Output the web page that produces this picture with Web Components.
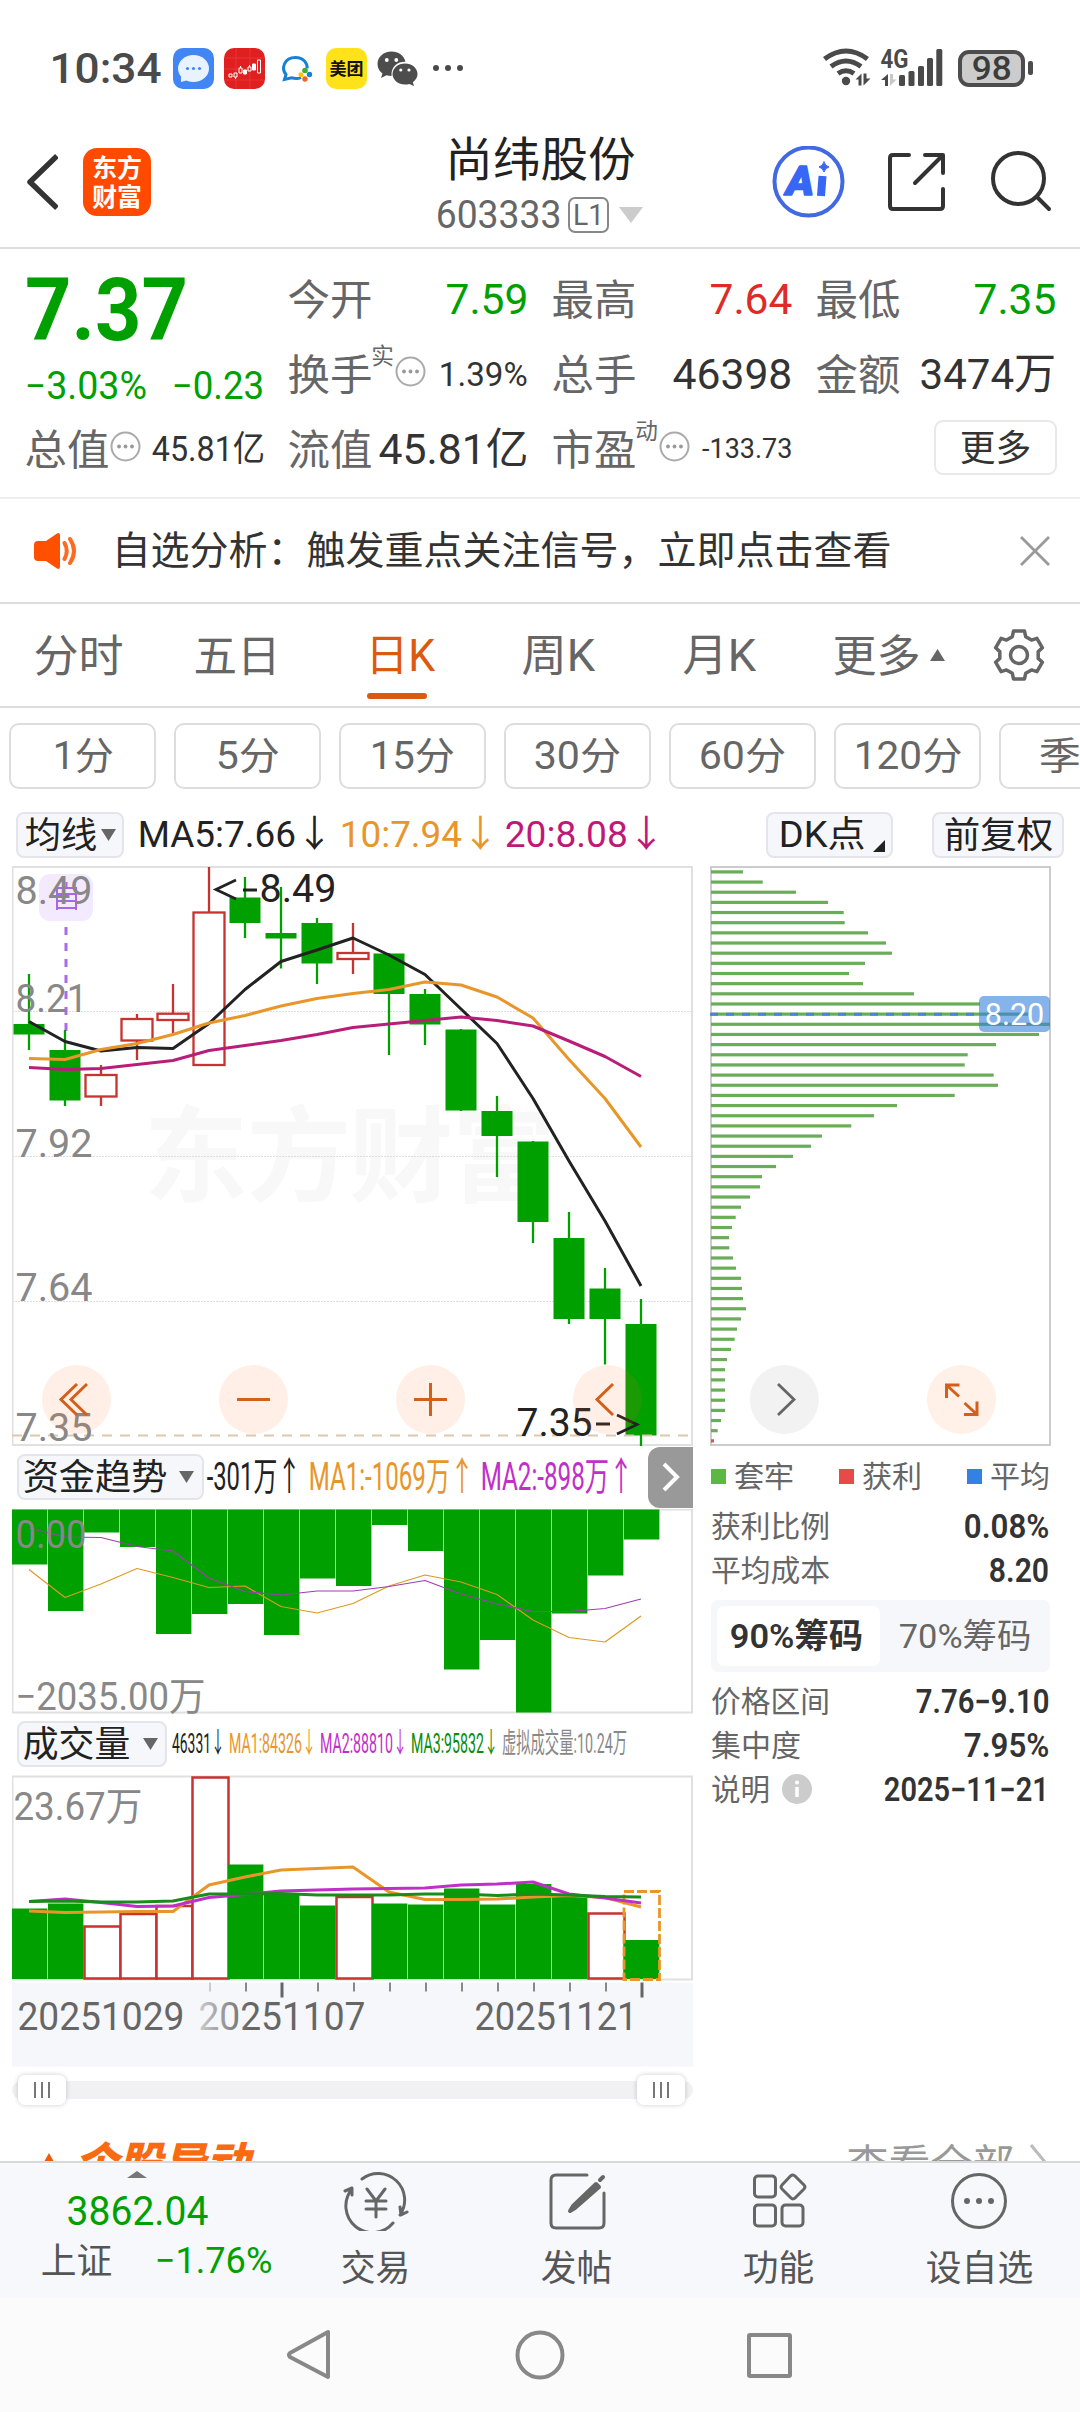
<!DOCTYPE html>
<html lang="zh-CN">
<head>
<meta charset="utf-8">
<title>尚纬股份 603333</title>
<style>
  html, body { margin: 0; padding: 0; background: #fff; }
  body { font-family: Roboto, "Noto Sans CJK SC", sans-serif; color: #333; width: 1080px; }
</style>
</head>
<body>
<stock-page></stock-page>

<script>
const GREEN = '#00a000';
const RED = '#c8322f';
const ORANGE = '#e8962a';
const PURPLE = '#c030c8';

class BaseElement extends HTMLElement {
  connectedCallback() {
    if (this.shadowRoot) return;
    const root = this.attachShadow({ mode: 'open' });
    const tpl = document.createElement('template');
    tpl.innerHTML = `<style>* { box-sizing: border-box; } svg { display: block; flex: none; }</style>` + this.render();
    root.appendChild(tpl.content.cloneNode(true));
  }
}

// <fit-text w="82" size="42">label</fit-text>
// One line of text, squeezed or stretched so that its ink is w px wide.
class FitText extends HTMLElement {
  connectedCallback() {
    if (this.shadowRoot) return;
    const w = +this.getAttribute('w');
    const size = +this.getAttribute('size');
    const weight = this.getAttribute('weight') || 400;
    const color = this.getAttribute('color') || 'inherit';
    const cjkOnly = !/[0-9A-Za-z]/.test(this.textContent);
    const root = this.attachShadow({ mode: 'open' });
    root.innerHTML = `
      <style>
        :host { display: block; flex: none; width: ${w}px; height: ${size}px; font-size: ${size}px; line-height: ${size}px; font-weight: ${weight}; color: ${color}; white-space: nowrap; }
        span { display: block; width: max-content; transform-origin: 0 50%; }
      </style>
      <span><slot></slot></span>
    `;
    const span = root.querySelector('span');
    const scale = (w + size * 0.07) / span.offsetWidth;
    const dy = cjkOnly ? 0.025 : 0.005;
    span.style.transform = `translate(${-size * 0.035}px, ${size * dy}px) scaleX(${scale})`;
  }
}

class StatusBar extends BaseElement {
  render() {
    return `
      <style>
        :host { display: flex; align-items: center; height: 116px; padding: 20px 47px 0 51px; color: #4a4a4a; }
        .app { width: 41px; height: 41px; margin-right: 10px; }
        .right { margin-left: auto; display: flex; align-items: center; }
        .battery { width: 67px; height: 37px; border: 4px solid #4d4d4d; border-radius: 11px; background: #ccc; display: flex; align-items: center; justify-content: center; }
        .cap { width: 5px; height: 14px; border-radius: 2px; background: #4d4d4d; margin-left: 3px; }
      </style>
      <fit-text w="109" size="43" weight="500" style="margin-right:13px">10:34</fit-text>
      <svg class="app" viewBox="0 0 41 41"><rect width="41" height="41" rx="10" fill="#4285f4"/><ellipse cx="20.5" cy="20.5" rx="15.5" ry="13.5" fill="#e8f3ff"/><path d="M8 28v6l7-2z" fill="#e8f3ff"/><g fill="#4285f4"><circle cx="14.5" cy="20.5" r="1.6"/><circle cx="20.5" cy="20.5" r="1.6"/><circle cx="26.5" cy="20.5" r="1.6"/></g></svg>
      <svg class="app" viewBox="0 0 41 41"><rect width="41" height="41" rx="10" fill="#e02020"/><g stroke="#ea3c3c" stroke-width=".7"><path d="M0 10h41M0 21h41M0 32h41M12 0v41M26 0v41"/></g><g stroke="#fff" stroke-width="1" fill="none"><path d="M5 26h3v3H5zM10 25h3v4h-3zM15 20h3v5h-3zM24 19h3v4h-3zM11.5 29v2M16.5 18v2M25.5 17v2"/><path d="M19.5 22h3v4h-3zM28.5 16h3v6h-3z" fill="#fff"/><path d="M33.5 12h3v13h-3z"/></g></svg>
      <svg class="app" viewBox="0 0 41 41"><path d="M26 29.500c-2.500 1.200-6 1.300-9.500.3L9.500 31.500l1.500-5c-5-6-2-17 9.500-17 8 0 12 5.500 11.700 11" fill="none" stroke="#1681d8" stroke-width="3"/><circle cx="30" cy="22.5" r="2.8" fill="#3fae29"/><circle cx="34.5" cy="26.5" r="2.7" fill="#1681d8"/><circle cx="30" cy="31" r="2.7" fill="#ee6723"/><circle cx="26" cy="26.8" r="2.5" fill="#fcc203"/></svg>
      <svg class="app" viewBox="0 0 41 41"><rect width="41" height="41" rx="10" fill="#ffe21a"/><text x="3.5" y="26.5" font-size="17" font-weight="700" fill="#111" textLength="34">美团</text></svg>
      <svg class="app" viewBox="0 0 41 41" fill="#4d4d4d"><path d="M14.500 3.500C6.500 3.500.5 9 .5 16c0 4 2 7.400 5 9.600L4 30l5.500-2.700c1.600.5 3.300.6 5 .6C14 18 21 13.500 28.500 13.800 27 7.500 21.500 3.500 14.500 3.500z"/><path d="M28 15.500c-7 0-12.500 4.700-12.500 10.500S21 36.500 28 36.500c1.500 0 3-.2 4.300-.6L37 38l-1.200-3.800c3-2 4.700-4.800 4.700-8.200 0-5.800-5.500-10.500-12.500-10.500z"/><g fill="#fff"><circle cx="9.8" cy="12" r="1.9"/><circle cx="19.3" cy="12" r="1.9"/><circle cx="23.8" cy="22" r="1.6"/><circle cx="32" cy="22" r="1.6"/></g></svg>
      <svg width="40" height="10" viewBox="0 0 40 10" fill="#4a4a4a"><circle cx="8" cy="5" r="3"/><circle cx="20" cy="5" r="3"/><circle cx="32" cy="5" r="3"/></svg>
      <div class="right">
        <svg width="135" height="40" viewBox="823 48 135 40" fill="none" stroke="#4a4a4a" stroke-width="5">
          <path d="M824.500 59Q846 43 867.500 59M831 66.500Q846 55.500 861 66.500M838 73.500Q846 68 854 73.500"/>
          <g stroke="none" fill="#4a4a4a"><circle cx="846" cy="81" r="4.2"/><path d="M861.500 73.500v12h-3v-6h-3zM863.500 73.500v12l7-7h-4v-5zM888 74v12h-3v-6h-4z"/><path d="M890 74v12l6.500-6.500h-3.500v-5.500z" fill="#c8c8c8"/>
          <text x="880.5" y="67.5" font-size="25" font-weight="700" textLength="28" lengthAdjust="spacingAndGlyphs">4G</text>
          <rect x="899" y="75" width="6" height="11" rx="1.5"/><rect x="908.5" y="71" width="6" height="15" rx="1.5"/><rect x="918" y="66" width="6" height="20" rx="1.5"/><rect x="927" y="58" width="6" height="28" rx="1.5"/><rect x="936.3" y="49" width="6" height="37" rx="1.5"/></g>
        </svg>
        <div class="battery"><fit-text w="38" size="34" weight="500" color="#3c3c3c">98</fit-text></div>
        <div class="cap"></div>
      </div>
    `;
  }
}

class StockHeader extends BaseElement {
  render() {
    return `
      <style>
        :host { display: grid; grid-template-columns: 1fr auto 1fr; align-items: center; height: 133px; border-bottom: 2px solid #ddd; box-sizing: border-box; }
        .left { display: flex; align-items: center; padding-left: 26px; }
        .logo { width: 68px; height: 68px; margin-left: 25px; border-radius: 14px; background: #ff4a00; display: flex; flex-direction: column; align-items: center; justify-content: center; gap: 4px; }
        .mid { display: flex; flex-direction: column; align-items: center; gap: 14px; padding-top: 5px; }
        .code { display: flex; align-items: center; gap: 8px; color: #666; }
        .l1 { width: 41px; height: 36px; border: 2px solid #888; border-radius: 7px; display: flex; align-items: center; justify-content: center; }
        .tools { display: flex; align-items: center; justify-content: flex-end; padding-right: 28px; }
      </style>
      <div class="left">
        <svg width="32" height="60" viewBox="26 152 32 60" fill="none" stroke="#333" stroke-width="5.5" stroke-linejoin="round"><path d="M57 156L30 182l27 26"/></svg>
        <div class="logo"><fit-text w="48" size="25" weight="700" color="#fff">东方</fit-text><fit-text w="48" size="25" weight="700" color="#fff">财富</fit-text></div>
      </div>
      <div class="mid">
        <fit-text w="187" size="47" color="#222">尚纬股份</fit-text>
        <div class="code"><fit-text w="123" size="38">603333</fit-text><div class="l1"><fit-text w="29" size="30">L1</fit-text></div>
        <svg width="24" height="16" viewBox="0 0 24 16" style="margin-left:2px"><path d="M0 0h24L12 16z" fill="#ccc"/></svg></div>
      </div>
      <div class="tools">
        <svg width="280" height="72" viewBox="772 146 280 72" fill="none" stroke="#333" stroke-width="4" stroke-linecap="round" stroke-linejoin="round">
          <circle cx="808.5" cy="181.5" r="34" stroke="#4169e1"/>
          <text x="786" y="195" font-size="40" font-weight="900" font-style="italic" fill="#3866f5" stroke="#3866f5" stroke-width="1.5" textLength="28" lengthAdjust="spacingAndGlyphs">A</text>
          <path d="M822.500 176l-1.500 20" stroke="#3866f5" stroke-width="8" stroke-linecap="butt"/>
          <path d="M824 162q1 4 5 5-4 1-5 5-1-4-5-5 4-1 5-5z" fill="#3866f5" stroke="#3866f5" stroke-width="1"/>
          <path d="M909 155h-16q-3 0-3 3v48q0 3 3 3h47q3 0 3-3v-17M925 155h18v18M942 156l-27 27"/>
          <circle cx="1018.5" cy="178.5" r="25.5"/><path d="M1037 197l12 12"/>
        </svg>
      </div>
    `;
  }
}

const MORE_DOT = `<svg width="31" height="31" viewBox="0 0 31 31" fill="#999"><circle cx="15.5" cy="15.5" r="14" fill="none" stroke="#aaa" stroke-width="2"/><circle cx="9" cy="15.5" r="1.9"/><circle cx="15.5" cy="15.5" r="1.9"/><circle cx="22" cy="15.5" r="1.9"/></svg>`;

// label / value pair, "dot" adds the round hint icon, "sup" a small raised mark
class QuoteCell extends BaseElement {
  render() {
    const a = n => this.getAttribute(n);
    const sup = a('sup') ? `<fit-text class="sup" w="21" size="23" color="#666">${a('sup')}</fit-text>` : '';
    return `
      <style>
        :host { display: flex; align-items: center; height: 75px; }
        .sup { align-self: flex-start; margin: 7px 0 0 1px; }
        .dot { margin: -7px 0 0 2px; }
        .value { margin-left: auto; }
      </style>
      <fit-text w="82" size="42" color="#666">${a('label')}</fit-text>${sup}
      ${a('dot') !== null ? `<div class="dot">${MORE_DOT}</div>` : ''}
      <fit-text class="value" w="${a('w')}" size="${a('size') || 43}" color="${a('color') || '#333'}">${a('value')}</fit-text>
    `;
  }
}

class QuoteGrid extends BaseElement {
  render() {
    return `
      <style>
        :host { display: grid; grid-template-columns: 237.5px 238px 238px 238px; column-gap: 25.7px; grid-auto-rows: 75px; height: 250px; padding: 13px 25px 0 26px; border-bottom: 2px solid #eee; box-sizing: border-box; }
        .price { grid-row: 1 / span 2; color: ${GREEN}; display: flex; flex-direction: column; padding: 5px 0 0 2px; }
        .diff { display: flex; gap: 27px; margin: 13px 0 0 -2px; }
        .more { justify-self: end; align-self: center; width: 123px; height: 55px; border: 2px solid #e8e8e8; border-radius: 9px; display: flex; align-items: center; justify-content: center; margin-right: -2px; margin-top: -4px; }
      </style>
      <div class="price">
        <fit-text w="157" size="87" weight="700">7.37</fit-text>
        <div class="diff"><fit-text w="120" size="38">−3.03%</fit-text><fit-text w="90" size="38">−0.23</fit-text></div>
      </div>
      <quote-cell label="今开" value="7.59" w="80" color="${GREEN}"></quote-cell>
      <quote-cell label="最高" value="7.64" w="80" color="#dc2b28"></quote-cell>
      <quote-cell label="最低" value="7.35" w="80" color="${GREEN}"></quote-cell>
      <quote-cell label="换手" sup="实" dot value="1.39%" w="87" size="33"></quote-cell>
      <quote-cell label="总手" value="46398" w="117"></quote-cell>
      <quote-cell label="金额" value="3474万" w="134"></quote-cell>
      <quote-cell label="总值" dot value="45.81亿" w="111" size="35"></quote-cell>
      <quote-cell label="流值" value="45.81亿" w="147"></quote-cell>
      <quote-cell label="市盈" sup="动" dot value="-133.73" w="88" size="27"></quote-cell>
      <div class="more"><fit-text w="69" size="36">更多</fit-text></div>
    `;
  }
}

class NoticeBar extends BaseElement {
  render() {
    return `
      <style>
        :host { display: flex; align-items: center; height: 105px; padding: 0 30px 0 34px; border-bottom: 2px solid #ddd; box-sizing: border-box; }
        fit-text { margin-left: 34px; }
        .close { margin-left: auto; }
      </style>
      <svg width="45" height="36" viewBox="0 0 45 36"><path d="M4 8h8L23 0.500q3-1.500 3 2v31q0 3.500-3 2L12 28H4q-4 0-4-4V12q0-4 4-4z" fill="#ff5000"/><path d="M30.500 10q4.500 8 0 16M36 6q8 12 0 24" fill="none" stroke="#ff6a20" stroke-width="4" stroke-linecap="round"/></svg>
      <fit-text w="777" size="39">自选分析：触发重点关注信号，立即点击查看</fit-text>
      <svg class="close" width="30" height="30" viewBox="0 0 30 30"><path d="M1 1l28 28M29 1L1 29" stroke="#999" stroke-width="2.8"/></svg>
    `;
  }
}

function gearPath(cx, cy) {
  const pts = [];
  const at = (r, deg) => {
    const t = deg * Math.PI / 180;
    pts.push(`${(cx + r * Math.cos(t)).toFixed(1)} ${(cy + r * Math.sin(t)).toFixed(1)}`);
  };
  for (let i = 0; i < 6; i++) {
    const a = i * 60 + 30;
    at(19.5, a - 20); at(24.5, a - 13); at(24.5, a + 13); at(19.5, a + 20);
  }
  return `M${pts.join('L')}Z`;
}

class PeriodTabs extends BaseElement {
  render() {
    const tabs = [['分时', 87, 73], ['五日', 84, 88], ['日K', 67, 89, 1], ['周K', 71, 90], ['月K', 71, 79], ['更多', 85, 0]];
    return `
      <style>
        :host { display: flex; align-items: center; height: 104px; padding: 0 34px 0 35px; border-bottom: 2px solid #ddd; box-sizing: border-box; color: #666; }
        .tab { display: flex; flex-direction: column; align-items: flex-start; padding-top: 2px; }
        .on { color: #dc5a10; }
        .on::after { content: ""; width: 60px; height: 6px; border-radius: 3px; background: currentColor; margin: 15px 0 -21px; }
        .gear { margin-left: auto; }
      </style>
      ${tabs.map(([t, w, gap, on]) => `<div class="tab${on ? ' on' : ''}" style="margin-right:${gap}px"><fit-text w="${w}" size="44">${t}</fit-text></div>`).join('')}
      <svg width="15" height="12" viewBox="0 0 15 12" style="margin-left:11px"><path d="M0 12h15L7.500 0z" fill="#666"/></svg>
      <svg class="gear" width="54" height="54" viewBox="0 0 54 54" fill="none" stroke="#666" stroke-width="3.5" stroke-linejoin="round"><path d="${gearPath(27, 27)}"/><circle cx="27" cy="27" r="8.5"/></svg>
    `;
  }
}

class MinuteRow extends BaseElement {
  render() {
    const items = [['1分', 58], ['5分', 61], ['15分', 83], ['30分', 85], ['60分', 85], ['120分', 106], ['季K', 66]];
    return `
      <style>
        :host { display: flex; gap: 18px; height: 95px; padding: 15px 0 0 9px; overflow: hidden; color: #666; box-sizing: border-box; }
        .item { flex: none; width: 147px; height: 66px; border: 2px solid #ddd; border-radius: 10px; display: flex; align-items: center; justify-content: center; }
      </style>
      ${items.map(([t, w]) => `<div class="item"><fit-text w="${w}" size="38">${t}</fit-text></div>`).join('')}
    `;
  }
}

class ToolPill extends BaseElement {
  render() {
    return `
      <style>
        :host { display: flex; flex: none; align-items: center; height: 46px; border: 2px solid #e4e5ec; border-radius: 8px; background: #f6f7fb; padding: 0 8px; box-sizing: border-box; color: #222; }
      </style>
      <slot></slot>
    `;
  }
}

const DOWN = (w = 15) => `<svg width="${w}" height="12" viewBox="0 0 15 12"><path d="M0 0h15L7.500 12z" fill="#666"/></svg>`;

class IndicatorRow extends BaseElement {
  render() {
    return `
      <style>:host { display: flex; align-items: center; height: 63px; padding: 0 16px 0 16px; box-sizing: border-box; }</style>
      <tool-pill style="width:108px"><fit-text w="70" size="36">均线</fit-text><div style="margin-left:5px">${DOWN()}</div></tool-pill>
      <fit-text style="margin-left:15px" w="193" size="37" color="#222">MA5:7.66↓</fit-text>
      <fit-text style="margin-left:9px" w="157" size="37" color="${ORANGE}">10:7.94↓</fit-text>
      <fit-text style="margin-left:8px" w="158" size="37" color="#c01878">20:8.08↓</fit-text>
      <tool-pill style="width:127px;margin-left:auto;padding-left:12px"><fit-text w="84" size="36">DK点</fit-text><svg width="12" height="12" viewBox="0 0 12 12" style="margin:22px 0 0 9px"><path d="M12 0v12H0z" fill="#222"/></svg></tool-pill>
      <tool-pill style="width:132px;margin-left:39px;padding-left:11px"><fit-text w="107" size="36">前复权</fit-text></tool-pill>
    `;
  }
}

// ---- charts: 18 daily slots, 36px apart ----

const SLOT = 36;
const cx = i => 29 + SLOT * i;
const polyline = (ys, color, width) =>
  `<polyline points="${ys.map((y, i) => `${cx(i)},${y}`).join(' ')}" fill="none" stroke="${color}" stroke-width="${width}" stroke-linejoin="round"/>`;
const label = (x, y, w, text, size = 39, color = '#888') =>
  `<text x="${x - size * 0.04}" y="${y}" font-size="${size}" fill="${color}" textLength="${w + size * 0.08}" lengthAdjust="spacingAndGlyphs">${text}</text>`;
const frame = (x, y, w, h, color = '#e0e0e0') =>
  `<rect x="${x}" y="${y}" width="${w}" height="${h}" fill="none" stroke="${color}" stroke-width="2"/>`;

class KChart extends BaseElement {
  render() {
    // [up, bodyTop, bodyBottom, high, low]
    const candles = [
      [0, 1024, 1034.5, 974, 1050], [0, 1050, 1100.5, 1030, 1106], [1, 1075, 1096.5, 1065, 1106],
      [1, 1019, 1040.5, 1014, 1060], [1, 1013.7, 1020, 984, 1033.5], [1, 912.5, 1065, 867, 1065],
      [0, 897.5, 923, 877, 938], [0, 933, 938.5, 887, 968.5], [0, 923, 963.5, 918, 984],
      [1, 953, 959, 923, 974], [0, 953.5, 994, 953, 1055], [0, 994, 1024.5, 989, 1045],
      [0, 1029.5, 1110.5, 1029, 1111], [0, 1111, 1136, 1096, 1177], [0, 1141.5, 1222, 1141, 1243],
      [0, 1238, 1319, 1212, 1324], [0, 1288.5, 1319, 1268, 1364.5], [0, 1324, 1435.5, 1299, 1446],
    ];
    const ma5 = [1021.5, 1041.5, 1051, 1047.5, 1048.5, 1023.5, 989.5, 961.5, 950, 938, 955, 974.5, 1009, 1043.5, 1098.5, 1161, 1221, 1286];
    const ma10 = [1058.5, 1059.5, 1049.5, 1043.5, 1034.5, 1023, 1015.5, 1006, 998.5, 993.5, 989.5, 982, 985, 997, 1018, 1059.5, 1098.5, 1147];
    const ma20 = [1067.5, 1069.5, 1068.5, 1064.5, 1060.5, 1050.5, 1045.5, 1040.5, 1034.5, 1027.5, 1024, 1020.5, 1017, 1020.5, 1026, 1041, 1056.5, 1076.5];
    const body = candles.map(([up, t, b, hi, lo], i) => up
      ? `<path d="M${cx(i)} ${hi}V${t}M${cx(i)} ${b}V${lo}" stroke="${RED}" stroke-width="2.3"/><rect x="${cx(i) - 15.5}" y="${t}" width="31" height="${b - t}" fill="#fff" fill-opacity=".6" stroke="${RED}" stroke-width="2.3"/>`
      : `<path d="M${cx(i)} ${hi}V${lo}" stroke="${GREEN}" stroke-width="2.3"/><rect x="${cx(i) - 15.5}" y="${t}" width="31" height="${b - t}" fill="${GREEN}"/>`).join('');
    const round = x => `<circle cx="${x}" cy="1399.5" r="34.5" fill="#ff6e1e" fill-opacity=".11"/>`;
    return `
      <style>:host { display: block; }</style>
      <svg width="681" height="580" viewBox="12 866 681 580">
        <text x="144" y="1194" font-size="104" font-weight="700" fill="#f8f8f8" textLength="412">东方财富</text>
        ${frame(12.5, 867, 679.5, 578)}
        <path d="M12 1011.500H692M12 1156.500H692M12 1301.500H692" stroke="#ddd" stroke-width="1" stroke-dasharray="2 1"/>
        <rect x="39" y="874" width="54" height="47" rx="11" fill="#f4eafe"/>
        <path d="M57 910V888h19v22M57 894h19M57 901h19M57 908h19M66.500 882v6" fill="none" stroke="#a866e8" stroke-width="2"/>
        <path d="M66 927V1032" stroke="#ae6ae6" stroke-width="3" stroke-dasharray="8 8"/>
        ${body}
        ${polyline(ma5, '#222', 3)}${polyline(ma10, ORANGE, 3)}${polyline(ma20, '#b81e78', 3)}
        <path d="M12 1435.500H690" stroke="#dcc8ae" stroke-width="1.8" stroke-dasharray="10 8"/>
        ${label(17, 904, 74, '8.49')}${label(17, 1011.5, 69, '8.21')}${label(17, 1156.5, 74, '7.92')}${label(17, 1300.5, 74, '7.64')}${label(17, 1441, 74, '7.35')}
        ${label(261, 902, 74, '8.49', 39, '#222')}
        ${label(518, 1436, 73, '7.35', 39, '#222')}
        <path d="M236 880l-20 9.500 20 9.500M243 890h14M596 1424h14M617 1415l20 9.500-20 9.500" fill="none" stroke="#222" stroke-width="2.8"/>
        ${round(76.5)}${round(253.5)}${round(430.5)}${round(607.5)}
        <g fill="none" stroke="#d2601a" stroke-width="3">
          <path d="M77 1384l-16 15.500 16 15.500M87 1384l-16 15.500 16 15.500M237 1399.500h33M414 1399.500h33M430.500 1383v33M613 1384l-16 15.500 16 15.500"/>
        </g>
      </svg>
    `;
  }
}

class FlowChart extends BaseElement {
  render() {
    const ends = [1564, 1610.5, 1532, 1546.5, 1633.5, 1613.5, 1603.5, 1634.5, 1578, 1585.5, 1524.5, 1550.5, 1669, 1639.5, 1712, 1613, 1575, 1539];
    const ma1 = [1569, 1597, 1583.5, 1568, 1577, 1587, 1585.5, 1606, 1612.5, 1603, 1585.5, 1574.5, 1581.5, 1594, 1619.5, 1637, 1641.5, 1615.5];
    const ma2 = [1527.5, 1536.5, 1537, 1546, 1550.5, 1577.5, 1591, 1594.5, 1590.5, 1590.5, 1586, 1580, 1593.5, 1603.5, 1611, 1611, 1608, 1598.5];
    return `
      <style>:host { display: block; }</style>
      <svg width="681" height="205" viewBox="12 1508.5 681 205">
        ${frame(12.5, 1509, 679.5, 203)}
        ${ends.map((y, i) => `<rect x="${12 + SLOT * i}" y="1509" width="35.4" height="${y - 1509}" fill="${GREEN}"/>`).join('')}
        ${polyline(ma1, '#dc9a20', 1.2)}${polyline(ma2, '#a03cb4', 1.2)}
        ${label(17, 1547, 68, '0.00')}${label(17, 1709, 187, '−2035.00万')}
      </svg>
    `;
  }
}

class VolumeChart extends BaseElement {
  render() {
    const bars = [
      [0, 1908], [0, 1903], [1, 1926], [1, 1913.5], [1, 1905.5], [1, 1777], [0, 1864], [0, 1892.5], [0, 1905],
      [1, 1896.5], [0, 1903], [0, 1904], [0, 1888], [0, 1904], [0, 1883.5], [0, 1895], [1, 1913], [0, 1939.5],
    ];
    const ma1 = [1910.5, 1912, 1911.5, 1911, 1911, 1884.5, 1876.5, 1869.5, 1868, 1866.5, 1891.5, 1899, 1899, 1898.5, 1896.5, 1895, 1897, 1906.5];
    const ma2 = [1901, 1898.5, 1902, 1906, 1905.5, 1897, 1894, 1890.5, 1889.5, 1888.5, 1888, 1887.5, 1884.5, 1883.5, 1881.5, 1893.5, 1897.5, 1902.5];
    const ma3 = [1901, 1900.5, 1901.5, 1901.5, 1900.5, 1893.5, 1893.5, 1893, 1894.5, 1894.5, 1894.5, 1893.5, 1893.5, 1895, 1893.5, 1894.5, 1896, 1896.5];
    const ticks = Array.from({ length: 13 }, (_, k) => {
      const major = k === 2 || k === 12;
      return `<path d="M${210 + SLOT * k} 1982v${major ? 15 : 9}" stroke="${k ? (major ? '#666' : '#888') : '#ccc'}" stroke-width="${major ? 3 : 2}"/>`;
    }).join('');
    return `
      <style>:host { display: block; }</style>
      <svg width="681" height="292" viewBox="12 1774.5 681 292">
        ${frame(12.5, 1776, 679.5, 203)}
        ${bars.map(([up, y], i) => up
          ? `<rect x="${12.5 + SLOT * i}" y="${y}" width="36" height="${1978 - y}" fill="#fff" stroke="${RED}" stroke-width="2.5"/>`
          : `<rect x="${12 + SLOT * i}" y="${y}" width="35.4" height="${1978.5 - y}" fill="${GREEN}"/>`).join('')}
        <rect x="624" y="1891" width="35.5" height="88" fill="none" stroke="${ORANGE}" stroke-width="2.8" stroke-dasharray="10 3"/>
        ${polyline(ma1, ORANGE, 3)}${polyline(ma2, PURPLE, 3)}${polyline(ma3, '#1a8c1a', 3)}
        ${label(15, 1819, 126, '23.67万')}
        <rect x="12" y="1982" width="681" height="84" fill="#f6f7fa"/>
        ${ticks}
        <defs><linearGradient id="fade"><stop offset="0" stop-color="#ccc"/><stop offset=".3" stop-color="#666"/></linearGradient></defs>
        ${label(19, 2029, 164, '20251029', 38, '#666')}${label(200, 2029, 164, '20251107', 38, 'url(#fade)')}${label(476, 2029, 160, '20251121', 38, '#666')}
      </svg>
    `;
  }
}

class RangeSlider extends BaseElement {
  render() {
    const grip = '<svg width="16" height="16" viewBox="0 0 16 16"><path d="M1 0v16M8 0v16M15 0v16" stroke="#777" stroke-width="2"/></svg>';
    return `
      <style>
        :host { display: flex; align-items: center; justify-content: space-between; height: 18px; margin-top: 14px; padding: 0 8px 0 6px; border-radius: 9px; background: #f1f1f3; box-sizing: border-box; }
        .knob { width: 48px; height: 30px; border-radius: 7px; background: #fff; box-shadow: 0 0 5px rgba(0,0,0,.2); display: flex; align-items: center; justify-content: center; }
      </style>
      <div class="knob">${grip}</div><div class="knob">${grip}</div>
    `;
  }
}

class ChipChart extends BaseElement {
  render() {
    const widths = [
      32, 51.7, 85, 117, 132.7, 133.7, 157, 175, 181, 154, 138, 152, 203, 269, 317, 339, 328, 285, 256.7, 253.7,
      282.7, 287, 243.7, 186, 163, 140.3, 111, 100, 82, 65, 51, 49, 39, 30, 24.7, 21, 18, 18.3, 22, 25,
      30, 31, 32, 35, 30, 26, 23.7, 20, 16, 14, 14, 14, 14, 14, 10, 6.7, 3,
    ];
    return `
      <style>:host { display: block; }</style>
      <svg width="342" height="580" viewBox="710 866 342 580">
        ${frame(711, 867, 339, 578, '#ccc')}
        ${widths.map((w, i) => `<rect x="711" y="${870.3 + 10.16 * i}" width="${w}" height="3.2" fill="${i === 56 ? '#d9534f' : '#6aad58'}"/>`).join('')}
        <path d="M710 1014.200H977" stroke="#4a84cc" stroke-width="3" stroke-dasharray="8 8"/>
        <rect x="979" y="996" width="71" height="36" rx="5" fill="#3480dc" fill-opacity=".6"/>
        ${label(986, 1025, 57, '8.20', 31, '#fff')}
        <circle cx="784.3" cy="1399.5" r="34.5" fill="#f2f2f2"/>
        <path d="M778 1384l16 15.500-16 15.500" fill="none" stroke="#666" stroke-width="2.8"/>
        <circle cx="961.5" cy="1399.5" r="34.5" fill="#fff0e8"/>
        <path d="M946.500 1398v-13h13M947 1385.500l12 11M977 1401.500v13h-13M976.500 1414l-12-11" fill="none" stroke="#d2601a" stroke-width="3"/>
      </svg>
    `;
  }
}

class ChipStats extends BaseElement {
  render() {
    const row = (l, lw, v, vw, extra = '') =>
      `<div class="row"><fit-text w="${lw}" size="30" color="#666">${l}</fit-text>${extra}<fit-text class="v" w="${vw}" size="33" weight="600">${v}</fit-text></div>`;
    const key = (c, t) => `<div class="key"><i style="background:${c}"></i><fit-text w="58" size="30">${t}</fit-text></div>`;
    return `
      <style>
        :host { display: flex; flex-direction: column; width: 339px; margin-left: 1px; }
        .legend { display: flex; justify-content: space-between; height: 58px; align-items: center; color: #666; padding: 2px 1px 0 0; }
        .key { display: flex; align-items: center; gap: 9px; }
        .key i { width: 15px; height: 15px; }
        .row { display: flex; align-items: center; height: 44px; padding: 0 2px 0 1px; }
        .v { margin-left: auto; }
        .seg { display: flex; height: 72px; margin: 8px 0 7px; padding: 6px; border-radius: 7px; background: #f6f7fa; }
        .seg div { flex: 1; display: flex; align-items: center; justify-content: center; color: #666; border-radius: 7px; }
        .seg .on { background: #fff; color: #333; padding-right: 4px; }
        .seg .off { padding-left: 6px; }
      </style>
      <div class="legend">${key('#5cb840', '套牢')}${key('#e84a4a', '获利')}${key('#3480e4', '平均')}</div>
      ${row('获利比例', 117, '0.08%', 83)}
      ${row('平均成本', 117, '8.20', 58)}
      <div class="seg"><div class="on"><fit-text w="131" size="34" weight="600">90%筹码</fit-text></div><div class="off"><fit-text w="130" size="34">70%筹码</fit-text></div></div>
      ${row('价格区间', 117, '7.76−9.10', 131)}
      ${row('集中度', 88, '7.95%', 83)}
      ${row('说明', 57, '2025−11−21', 163, '<svg width="30" height="30" viewBox="0 0 30 30" style="margin-left:13px"><circle cx="15" cy="15" r="15" fill="#ccc"/><circle cx="15" cy="8.5" r="2" fill="#fff"/><path d="M15 13v10" stroke="#fff" stroke-width="3.5"/></svg>')}
    `;
  }
}

class ChartArea extends BaseElement {
  render() {
    return `
      <style>
        :host { display: flex; padding-left: 12px; gap: 17px; }
        .left { width: 681px; flex: none; }
        .head { display: flex; align-items: center; padding-left: 5px; }
        .next { margin-left: auto; width: 45px; height: 61px; border-radius: 12px 0 0 12px; background: #999; display: flex; align-items: center; justify-content: center; }
      </style>
      <div class="left">
        <k-chart></k-chart>
        <div class="head" style="height:62.5px">
          <tool-pill style="width:187px;padding-left:5px"><fit-text w="142" size="36">资金趋势</fit-text><div style="margin-left:13px">${DOWN()}</div></tool-pill>
          <fit-text style="margin-left:4px" w="92" size="39" color="#222">-301万↑</fit-text>
          <fit-text style="margin-left:10px" w="163" size="39" color="${ORANGE}">MA1:-1069万↑</fit-text>
          <fit-text style="margin-left:9px" w="150" size="39" color="${PURPLE}">MA2:-898万↑</fit-text>
          <div class="next"><svg width="18" height="30" viewBox="0 0 18 30"><path d="M2 2l13 13L2 28" fill="none" stroke="#fff" stroke-width="4"/></svg></div>
        </div>
        <flow-chart></flow-chart>
        <div class="head" style="height:61px">
          <tool-pill style="width:150px;padding-left:5px"><fit-text w="105" size="36">成交量</fit-text><div style="margin-left:14px">${DOWN()}</div></tool-pill>
          <fit-text style="margin-left:6px" w="51" size="28" color="#222">46331↓</fit-text>
          <fit-text style="margin-left:6px" w="85" size="28" color="${ORANGE}">MA1:84326↓</fit-text>
          <fit-text style="margin-left:6px" w="85" size="28" color="${PURPLE}">MA2:88810↓</fit-text>
          <fit-text style="margin-left:6px" w="85" size="28" color="#0a8c0a">MA3:95832↓</fit-text>
          <fit-text style="margin-left:6px" w="123" size="28" color="#888">虚拟成交量:10.24万</fit-text>
        </div>
        <volume-chart></volume-chart>
        <range-slider></range-slider>
      </div>
      <div>
        <chip-chart></chip-chart>
        <chip-stats></chip-stats>
      </div>
    `;
  }
}

// section heading, cut off by the bottom bar
class MoveTeaser extends BaseElement {
  render() {
    return `
      <style>
        :host { display: flex; align-items: flex-start; padding: 43px 33px 0 40px; height: 64px; box-sizing: border-box; overflow: hidden; }
        .all { margin: 2px 0 0 auto; display: flex; gap: 17px; }
      </style>
      <svg width="18" height="30" viewBox="0 0 18 30" style="margin-top:11px"><path d="M9 0l9 16H0z" fill="#f25a0a"/></svg>
      <fit-text style="margin:-1px 0 0 18px;font-style:italic" w="172" size="43" weight="900" color="#fa6a10">个股异动</fit-text>
      <div class="all"><fit-text w="165" size="41" color="#999">查看全部</fit-text><svg width="17" height="36" viewBox="0 0 17 36"><path d="M1 1l14 17L1 35" fill="none" stroke="#bbb" stroke-width="3"/></svg></div>
    `;
  }
}

class BottomBar extends BaseElement {
  render() {
    const item = (svg, t, w) => `<div class="item"><svg width="66" height="62" viewBox="0 0 66 62" fill="none" stroke="#666" stroke-width="3" stroke-linecap="round" stroke-linejoin="round">${svg}</svg><fit-text w="${w}" size="36">${t}</fit-text></div>`;
    return `
      <style>
        :host { display: flex; flex: none; height: 137px; background: #f6f8fb; border-top: 2px solid #d8d8d8; box-sizing: border-box; color: #555; }
        .index { width: 275px; display: flex; flex-direction: column; align-items: center; padding-top: 8px; }
        .index .row { display: flex; gap: 45px; margin-top: 11px; padding-left: 38px; }
        .item { width: 201.3px; display: flex; flex-direction: column; align-items: center; padding-top: 6px; gap: 19px; }
      </style>
      <div class="index">
        <svg width="20" height="7" viewBox="0 0 20 7"><path d="M0 7h20L10 0z" fill="#777"/></svg>
        <fit-text w="139" size="41" color="${GREEN}" style="margin-top:13px">3862.04</fit-text>
        <div class="row"><fit-text w="69" size="36">上证</fit-text><fit-text w="115" size="36" color="${GREEN}">−1.76%</fit-text></div>
      </div>
      ${item('<path d="M19 10A26.500 26.500 0 0 1 57 46M9 20A26.500 26.500 0 0 0 50 54M2 22l7-3v7M64 43l-6 3-1-8M24 20l9 12 9-12M33 32v16M23 32h20M23 40h20"/>', '交易', 67)}
      ${item('<path d="M43 6H12q-5 0-5 5v43q0 5 5 5h43q5 0 5-5V24"/><path d="M52 15L29 37l-3 5 5-3 24-21zM56 11l3-3" stroke-width="4" fill="#666"/>', '发帖', 69)}
      ${item('<rect x="9.5" y="7" width="21" height="21" rx="3.5"/><rect x="9.5" y="36" width="21" height="21" rx="3.5"/><rect x="37" y="36" width="21" height="21" rx="3.5"/><path d="M45.500 7L37 16q-2 2 0 4l9 9q2 2 4 0l9-9q2-2 0-4l-9-9q-2-2-4.500 0z"/>', '功能', 69)}
      ${item('<circle cx="33" cy="32" r="26.5"/><g fill="#666" stroke="none"><circle cx="21" cy="32" r="3"/><circle cx="33" cy="32" r="3"/><circle cx="45" cy="32" r="3"/></g>', '设自选', 105)}
    `;
  }
}

class SystemNav extends BaseElement {
  render() {
    return `
      <style>:host { display: flex; flex: none; justify-content: center; align-items: center; height: 114px; background: #fbfbfb; }</style>
      <svg width="510" height="54" viewBox="285 2328 510 54" fill="none" stroke="#888" stroke-width="4" stroke-linejoin="round"><path d="M328 2332v45L290 2357q-2-2 0-4z"/><circle cx="540" cy="2355" r="22.5"/><rect x="749" y="2335" width="41" height="41" rx="1"/></svg>
    `;
  }
}

class StockPage extends BaseElement {
  render() {
    return `
      <style>
        :host { display: flex; flex-direction: column; width: 1080px; height: 2412px; overflow: hidden; }
        main { flex: 1; min-height: 0; overflow: hidden; }
        status-bar { box-sizing: border-box; }
      </style>
      <main>
        <status-bar></status-bar>
        <stock-header></stock-header>
        <quote-grid></quote-grid>
        <notice-bar></notice-bar>
        <period-tabs></period-tabs>
        <minute-row></minute-row>
        <indicator-row></indicator-row>
        <chart-area></chart-area>
        <move-teaser></move-teaser>
      </main>
      <bottom-bar></bottom-bar>
      <system-nav></system-nav>
    `;
  }
}

customElements.define('fit-text', FitText);
customElements.define('status-bar', StatusBar);
customElements.define('stock-header', StockHeader);
customElements.define('quote-cell', QuoteCell);
customElements.define('quote-grid', QuoteGrid);
customElements.define('notice-bar', NoticeBar);
customElements.define('period-tabs', PeriodTabs);
customElements.define('minute-row', MinuteRow);
customElements.define('tool-pill', ToolPill);
customElements.define('indicator-row', IndicatorRow);
customElements.define('k-chart', KChart);
customElements.define('flow-chart', FlowChart);
customElements.define('volume-chart', VolumeChart);
customElements.define('range-slider', RangeSlider);
customElements.define('chip-chart', ChipChart);
customElements.define('chip-stats', ChipStats);
customElements.define('chart-area', ChartArea);
customElements.define('move-teaser', MoveTeaser);
customElements.define('bottom-bar', BottomBar);
customElements.define('system-nav', SystemNav);
customElements.define('stock-page', StockPage);
</script>
</body>
</html>
